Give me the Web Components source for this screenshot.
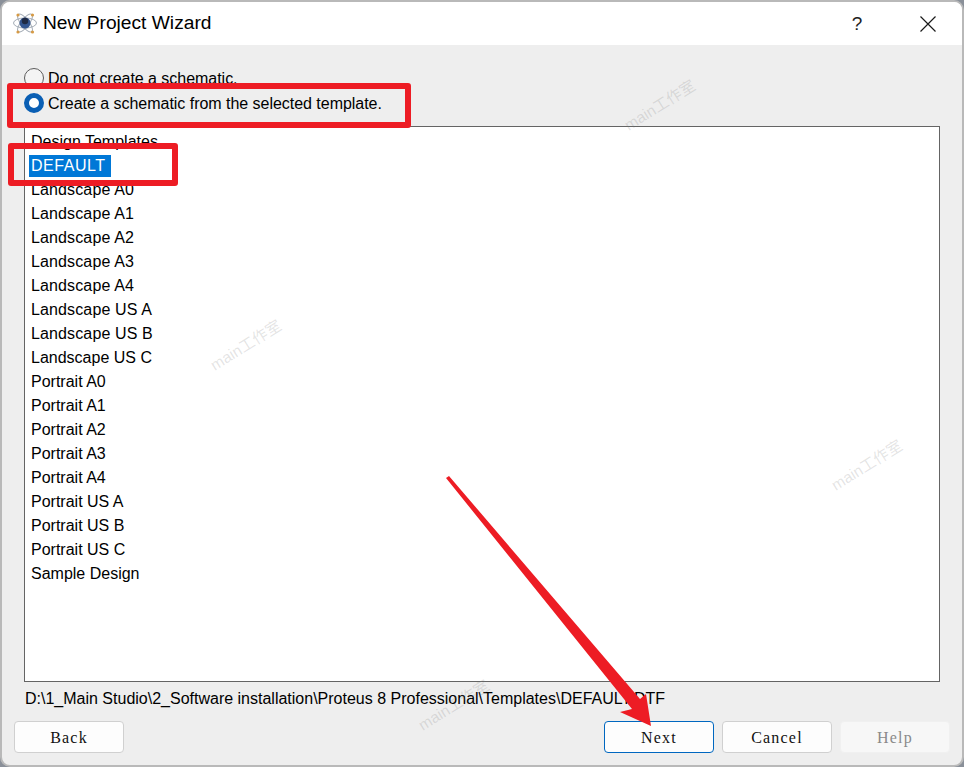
<!DOCTYPE html>
<html><head><meta charset="utf-8"><style>html,body{margin:0;padding:0;background:#8a9099}body{width:964px;height:767px;overflow:hidden;font-family:"Liberation Sans",Arial,sans-serif}.w{letter-spacing:.13px}</style></head><body>
<wizard-dialog>
<span slot="title">New Project Wizard</span>
<wizard-radio>Do not create a schematic.</wizard-radio>
<wizard-radio checked>Create a schematic from the selected template.</wizard-radio>
<template-list slot="list">
<list-row>Design Templates</list-row><list-row selected>DEFAULT</list-row><list-row class="w">Landscape A0</list-row><list-row class="w">Landscape A1</list-row><list-row class="w">Landscape A2</list-row><list-row class="w">Landscape A3</list-row><list-row class="w">Landscape A4</list-row><list-row class="w">Landscape US A</list-row><list-row class="w">Landscape US B</list-row><list-row>Landscape US C</list-row><list-row>Portrait A0</list-row><list-row>Portrait A1</list-row><list-row>Portrait A2</list-row><list-row>Portrait A3</list-row><list-row>Portrait A4</list-row><list-row>Portrait US A</list-row><list-row>Portrait US B</list-row><list-row>Portrait US C</list-row><list-row>Sample Design</list-row>
</template-list>
<span slot="path">D:\1_Main Studio\2_Software installation\Proteus 8 Professional\Templates\DEFAULT.DTF</span>
<wizard-button slot="back">Back</wizard-button>
<wizard-button slot="actions" focused>Next</wizard-button>
<wizard-button slot="actions">Cancel</wizard-button>
<wizard-button slot="actions" disabled>Help</wizard-button>
</wizard-dialog>
<water-mark style="left:625px;top:114px">main工作室</water-mark>
<water-mark style="left:211px;top:354px">main工作室</water-mark>
<water-mark style="left:832px;top:474px">main工作室</water-mark>
<water-mark style="left:419px;top:714px">main工作室</water-mark>
<mark-up></mark-up>
<script>
function def(name,html){customElements.define(name,class extends HTMLElement{constructor(){super();this.attachShadow({mode:'open'}).innerHTML=html;}});}
def('wizard-dialog',`<style>
:host{display:flex;flex-direction:column;box-sizing:border-box;width:964px;height:767px;background:#eee;border:2px solid #b9b9b9;border-radius:10px;overflow:hidden;color:#000;font:16px "Liberation Sans",Arial,sans-serif}
.bar{display:flex;align-items:center;height:43px;background:#fff;flex:none;padding-left:11px}
.logo{flex:none;margin-right:4px}
.t{font-size:19.200px;flex:1;padding-bottom:2px}
.q{width:16px;text-align:center;font-size:19px;color:#222;margin-right:55px}
.x{flex:none;margin-right:26px;display:block}
.main{flex:1;display:flex;flex-direction:column;padding:20px 22px 0 22px;min-height:0}
.radios{display:flex;flex-direction:column;height:61px;flex:none}
.list{display:flex;flex:none;height:556px}
.path{height:30px;flex:none;display:flex;align-items:center;padding:2px 0 0 1px;white-space:nowrap}
.foot{display:flex;justify-content:space-between;margin:7px -10px 0 -10px;height:32px;flex:none}
.act{display:flex;gap:8px}
</style>
<div class="bar"><svg class="logo" width="26" height="24" viewBox="0 0 26 24">
<g fill="none" stroke="#a4acb6" stroke-width="1"><ellipse cx="12" cy="11" rx="11.500" ry="5"/><ellipse cx="12" cy="11" rx="11" ry="4" transform="rotate(52 12 11)"/><ellipse cx="12" cy="11" rx="11" ry="4" transform="rotate(-52 12 11)"/></g>
<circle cx="12" cy="11" r="5.500" fill="#33558f"/><circle cx="12" cy="9" r="3.200" fill="#1f2a44"/>
<g fill="#d69a45"><circle cx="5" cy="3" r="1.600"/><circle cx="19.500" cy="3" r="1.600"/><circle cx="5" cy="20" r="1.600"/><circle cx="19.500" cy="20" r="1.600"/></g></svg>
<span class="t"><slot name="title"></slot></span><span class="q">?</span>
<svg class="x" width="16" height="16" viewBox="0 0 16 16"><path d="M.5.500 15.500 15.500M15.500.500.500 15.500" stroke="#1a1a1a" stroke-width="1.200" fill="none"/></svg></div>
<div class="main"><div class="radios"><slot></slot></div><div class="list"><slot name="list"></slot></div>
<div class="path"><slot name="path"></slot></div>
<div class="foot"><slot name="back"></slot><div class="act"><slot name="actions"></slot></div></div></div>`);
def('wizard-radio',`<style>
:host{display:flex;align-items:center;height:25.500px;white-space:nowrap;font-size:16px;letter-spacing:-.03px}
i{box-sizing:border-box;width:20px;height:20px;border-radius:50%;border:1px solid #5c5c5c;background:#f4f4f4;margin-right:4px;flex:none}
:host([checked]) i{border:5.500px solid #0a5fb4;background:#fff}
span{padding-top:2px}
</style><i></i><span><slot></slot></span>`);
def('template-list',`<style>:host{display:block;box-sizing:border-box;width:916px;height:556px;background:#fff;border:1px solid #646464;padding:3px 0 0 4px}</style><slot></slot>`);
def('list-row',`<style>:host{display:block;height:24px;line-height:24px;white-space:nowrap;font-size:16px}
span{display:inline-block;padding:0 2px;height:24px}
:host([selected]) span{background:#0078d7;color:#fff;height:22px;line-height:22px;margin-top:1px;padding-right:5px;letter-spacing:.55px}</style><span><slot></slot></span>`);
def('wizard-button',`<style>:host{display:flex;align-items:center;justify-content:center;box-sizing:border-box;width:110px;height:32px;padding-top:1px;background:#fdfdfd;border:1px solid #d0d0d0;border-radius:4px;font:16px "Liberation Serif",serif;letter-spacing:1.200px;color:#111}
:host([focused]){border-color:#0067c0}
:host([disabled]){background:#f7f7f7;border-color:#f0f0f0;color:#8a8a8a}</style><slot></slot>`);
def('water-mark',`<style>:host{position:absolute;display:block;color:rgba(120,120,120,.2);font:15.500px "Liberation Sans","Noto Sans CJK SC",sans-serif;transform:rotate(-32deg);transform-origin:left center;white-space:nowrap}</style><slot></slot>`);
def('mark-up',`<style>:host{position:absolute;left:0;top:0;width:964px;height:767px;display:block;pointer-events:none}svg{display:block}</style>
<svg width="964" height="767" viewBox="0 0 964 767"><g fill="none" stroke="#ed1c24" stroke-width="6" stroke-linejoin="round"><rect x="10" y="86" width="398" height="39"/><rect x="11" y="146" width="164" height="37"/></g>
<path d="M446 478 449 476 640 699 646 694 651 726 620 712 632 709Z" fill="#ed1c24"/></svg>`);
</script></body></html>
